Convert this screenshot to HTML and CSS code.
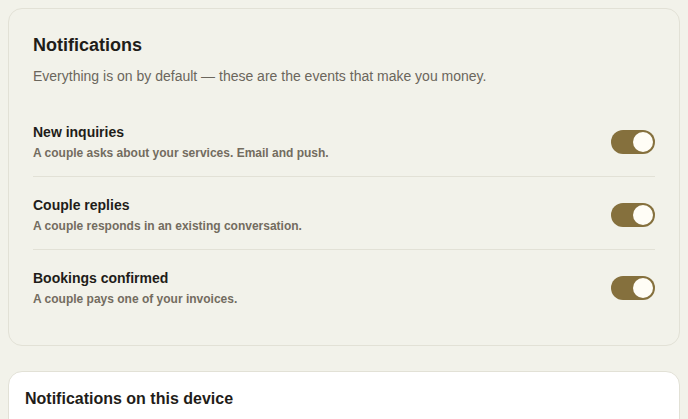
FILE: index.html
```html
<!DOCTYPE html>
<html lang="en">
<head>
<meta charset="utf-8">
<link rel="stylesheet" href="styles.css">
</head>
<body>
<section class="card">
  <h2 class="title">Notifications</h2>
  <p class="sub">Everything is on by default — these are the events that make you money.</p>
  <div class="rows">
    <div class="row">
      <div class="text">
        <div class="name">New inquiries</div>
        <div class="desc">A couple asks about your services. Email and push.</div>
      </div>
      <span class="toggle on"><span class="knob"></span></span>
    </div>
    <div class="row">
      <div class="text">
        <div class="name">Couple replies</div>
        <div class="desc">A couple responds in an existing conversation.</div>
      </div>
      <span class="toggle on"><span class="knob"></span></span>
    </div>
    <div class="row">
      <div class="text">
        <div class="name">Bookings confirmed</div>
        <div class="desc">A couple pays one of your invoices.</div>
      </div>
      <span class="toggle on"><span class="knob"></span></span>
    </div>
  </div>
</section>
<section class="card device">
  <h2 class="title2">Notifications on this device</h2>
</section>
</body>
</html>
```
FILE: styles.css
```css
* { box-sizing: border-box; }
html, body { margin: 0; }
body {
  background: #f2f2ea;
  font-family: "Liberation Sans", Arial, sans-serif;
  color: #1f1d19;
  padding: 8px;
  display: flex;
  flex-direction: column;
  gap: 25px;
}
.card {
  border: 1px solid #e2e1d6;
  border-radius: 14px;
  background: #f2f2ea;
  padding: 24px 24px 24px;
}
.title {
  margin: 0;
  font-size: 18px;
  line-height: 24px;
  font-weight: 700;
}
.sub {
  margin: 9px 0 0;
  font-size: 14px;
  line-height: 20px;
  color: #6b665c;
}
.rows {
  margin-top: 18px;
  display: flex;
  flex-direction: column;
}
.row {
  display: flex;
  align-items: flex-start;
  justify-content: space-between;
  height: 73px;
  padding-top: 18px;
  border-bottom: 1px solid #e2e1d6;
}
.row:last-child { border-bottom: none; height: 71px; }
.name {
  font-size: 14px;
  line-height: 21px;
  font-weight: 700;
}
.desc {
  margin-top: 1px;
  font-size: 12px;
  line-height: 18px;
  font-weight: 700;
  color: #736c5f;
}
.toggle {
  margin-top: 8px;
  width: 44px;
  height: 24px;
  border-radius: 12px;
  background: #85703d;
  display: flex;
  align-items: center;
  justify-content: flex-end;
  padding: 2px;
  flex: none;
}
.knob {
  width: 20px;
  height: 20px;
  border-radius: 50%;
  background: #fffdf6;
}
.device {
  background: #ffffff;
  padding: 16px;
  min-height: 80px;
}
.title2 {
  margin: 0;
  font-size: 16px;
  line-height: 21px;
  font-weight: 700;
}
```
